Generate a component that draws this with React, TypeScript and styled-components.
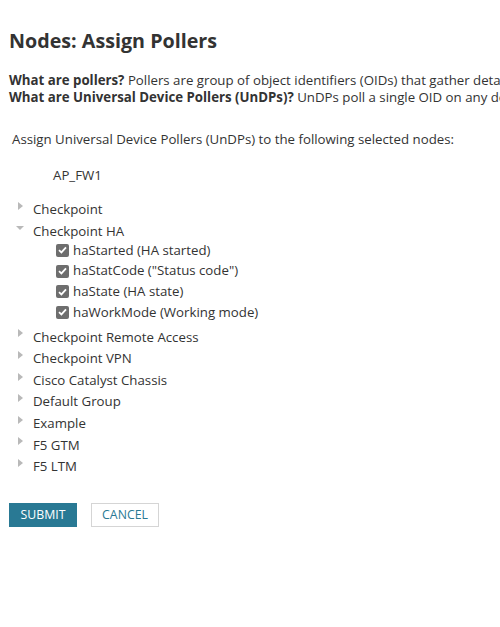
import { createGlobalStyle } from "styled-components";
import styled from "styled-components";

const GlobalStyle = createGlobalStyle`
  html, body {
    margin: 0;
    padding: 0;
    background: #fff;
  }
  body {
    font-family: "Open Sans", "DejaVu Sans", sans-serif;
    font-size: 13.25px;
    color: #333;
  }
`;

const Page = styled.div`
  width: 500px;
  height: 627px;
  overflow: hidden;
  padding: 0 9px;
  box-sizing: border-box;
`;

const Title = styled.h1`
  margin: 0;
  padding-top: 29px;
  font-size: 19.7px;
  font-weight: 700;
  line-height: 24px;
  color: #333;
  white-space: nowrap;
`;

const Intro = styled.div`
  margin-top: 19px;
  line-height: 17px;
  white-space: nowrap;
`;

const Lead = styled.p`
  margin: 25px 0 0 3px;
  line-height: 17px;
`;

const NodeName = styled.div`
  margin: 19px 0 0 44px;
  line-height: 17px;
`;

const Tree = styled.ul`
  list-style: none;
  margin: 15px 0 0;
  padding: 0 0 0 7px;
`;

const Group = styled.li`
  line-height: 21.6px;
`;

const GroupRow = styled.div`
  display: flex;
  align-items: center;
  gap: 9px;
  height: 21.6px;
`;

const Toggle = styled.span<{ $open?: boolean }>`
  width: 8px;
  height: 9px;
  display: flex;
  align-items: center;
  justify-content: center;
  margin-top: ${(p) => (p.$open ? "-6px" : "-8px")};
  &::before {
    content: "";
    display: block;
    border-style: solid;
    border-color: transparent;
    ${(p) =>
      p.$open
        ? "border-width: 4.5px 4px 0 4px; border-top-color: #b9b9b9;"
        : "border-width: 4.5px 0 4.5px 5px; border-left-color: #b9b9b9;"}
  }
`;

const Pollers = styled.ul`
  list-style: none;
  margin: -2.2px 0 0;
  padding: 0 0 3.8px 40px;
`;

const Poller = styled.li`
  display: flex;
  align-items: center;
  gap: 4px;
  height: 20.7px;
`;

const Box = styled.span`
  width: 13px;
  height: 13px;
  border-radius: 2px;
  background: #6e6e6e;
  display: flex;
  align-items: center;
  justify-content: center;
`;

const Actions = styled.div`
  display: flex;
  gap: 14px;
  margin-top: 25px;
`;

const Button = styled.button<{ $primary?: boolean }>`
  font-family: "Open Sans", "DejaVu Sans", sans-serif;
  font-size: 12.3px;
  height: 24px;
  padding: 0 10px;
  min-width: 68px;
  text-transform: uppercase;
  cursor: pointer;
  border: 1px solid ${(p) => (p.$primary ? "#297994" : "#d5d5d5")};
  background: ${(p) => (p.$primary ? "#297994" : "#fff")};
  color: ${(p) => (p.$primary ? "#fff" : "#297994")};
`;

const groups = [
  { name: "Checkpoint" },
  {
    name: "Checkpoint HA",
    pollers: [
      "haStarted (HA started)",
      'haStatCode ("Status code")',
      "haState (HA state)",
      "haWorkMode (Working mode)",
    ],
  },
  { name: "Checkpoint Remote Access" },
  { name: "Checkpoint VPN" },
  { name: "Cisco Catalyst Chassis" },
  { name: "Default Group" },
  { name: "Example" },
  { name: "F5 GTM" },
  { name: "F5 LTM" },
];

const Check = () => (
  <svg width="9" height="8" viewBox="0 0 9 8">
    <path d="M1 4.2 L3.4 6.4 L8 1.4" fill="none" stroke="#fff" strokeWidth="1.8" />
  </svg>
);

export default function App() {
  return (
    <Page>
      <GlobalStyle />
      <Title>Nodes: Assign Pollers</Title>
      <Intro>
        <div>
          <b>What are pollers?</b> Pollers are group of object identifiers (OIDs) that gather details
          about your devices.
        </div>
        <div>
          <b>What are Universal Device Pollers (UnDPs)?</b> UnDPs poll a single OID on any device.
        </div>
      </Intro>
      <Lead>Assign Universal Device Pollers (UnDPs) to the following selected nodes:</Lead>
      <NodeName>AP_FW1</NodeName>
      <Tree>
        {groups.map((g) => (
          <Group key={g.name}>
            <GroupRow>
              <Toggle $open={!!g.pollers} />
              <span>{g.name}</span>
            </GroupRow>
            {g.pollers && (
              <Pollers>
                {g.pollers.map((p) => (
                  <Poller key={p}>
                    <Box>
                      <Check />
                    </Box>
                    <span>{p}</span>
                  </Poller>
                ))}
              </Pollers>
            )}
          </Group>
        ))}
      </Tree>
      <Actions>
        <Button $primary>Submit</Button>
        <Button>Cancel</Button>
      </Actions>
    </Page>
  );
}
